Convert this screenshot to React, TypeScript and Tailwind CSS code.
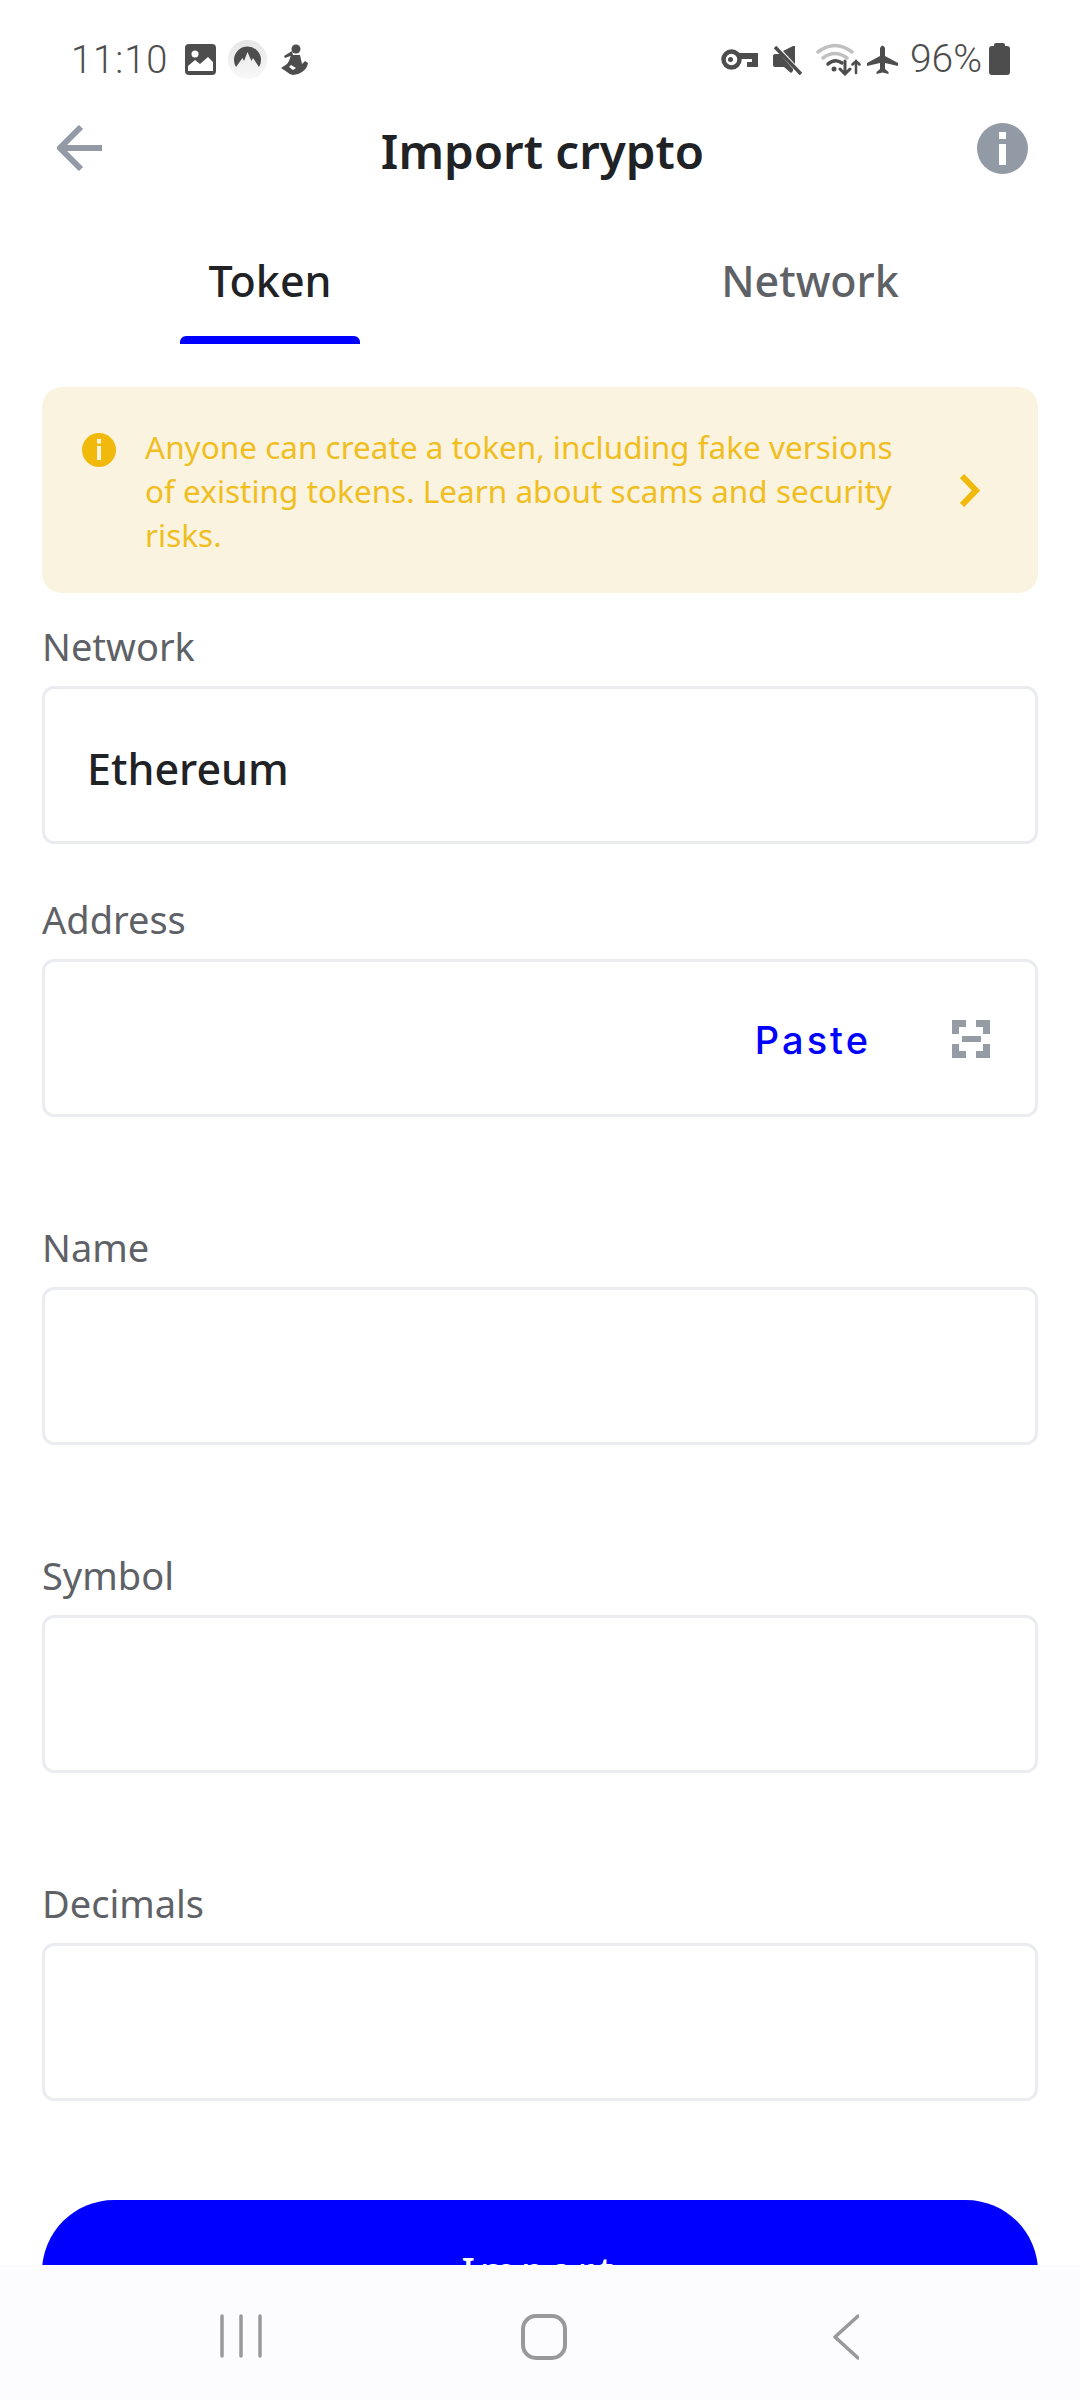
const plex = "font-['Noto_Sans','Liberation_Sans',sans-serif]";

function StatusIcons() {
  return (
    <div className="flex items-center">
      <svg width="37" height="23" viewBox="0 0 37 23" className="mr-[14px]" fill="#4d4d4d">
        <circle cx="10.500" cy="11.500" r="8" fill="none" stroke="#4d4d4d" strokeWidth="4.500" />
        <circle cx="9.500" cy="11.500" r="2.500" />
        <path d="M18 5h19v14H26v-5h5v-3H18z" />
      </svg>
      <svg width="30" height="30" viewBox="0 0 30 30" className="mr-[14px]" fill="#4d4d4d">
        <path d="M1 11q0-2 2-2h5l6 7 7 8v2l-2 2-7-6H3q-2 0-2-2z" />
        <path d="M21 1h2v18L11 6z" />
        <path d="M3 2 29 29" fill="none" stroke="#4d4d4d" strokeWidth="3.500" />
      </svg>
      <svg width="45" height="33" viewBox="0 0 45 33" className="mr-[6px]" fill="none" strokeLinecap="round">
        <path d="M2 9Q19-4 36 9" stroke="#c0c0c0" strokeWidth="3.500" />
        <path d="M7 15Q19 6 31 15" stroke="#c0c0c0" strokeWidth="3.500" />
        <path d="M12 21Q19 15 26 20" stroke="#4d4d4d" strokeWidth="3.500" />
        <circle cx="18" cy="26" r="2.500" fill="#4d4d4d" />
        <path d="M29 18v13m-5-5 5 5 5-5" stroke="#4d4d4d" strokeWidth="3" />
        <path d="M40 30V18m-3.500 3.500L40 18l3.500 3.500" stroke="#4d4d4d" strokeWidth="2.500" />
      </svg>
      <svg width="31" height="29" viewBox="0 0 31 29" className="mr-[12px]" fill="#4d4d4d">
        <path d="M13 3q2.500-5 5 0v8l13 7v3l-13-3v6l3.500 3v2l-6-1.500-6 1.500v-2l3.500-3v-6L0 21v-3l13-7z" />
      </svg>
      <span className="font-['Roboto',sans-serif] text-[39px] leading-none font-light text-[#4d4d4d]">96%</span>
      <div className="relative mt-[2px] ml-[7px] h-[29px] w-[21px] rounded-[3px] bg-[#4d4d4d]">
        <div className="absolute -top-[3px] left-[5px] h-[4px] w-[11px] rounded-t-[2px] bg-[#4d4d4d]" />
      </div>
    </div>
  );
}

function Field({ label, className, children }: { label: string; className: string; children?: React.ReactNode }) {
  return (
    <div className={className}>
      <div className={`${plex} h-[38px] text-[38px] leading-[34px] text-[#5e6166]`}>{label}</div>
      <div className="mt-[19px] flex h-[158px] items-center rounded-[12px] border-[3px] border-[#eaecef] bg-white pl-[42px]">
        {children}
      </div>
    </div>
  );
}

export default function App() {
  return (
    <div className="flex h-[2400px] w-[1080px] flex-col overflow-hidden bg-white">
      <div className="min-h-0 flex-1 overflow-hidden">
        {/* status bar */}
        <div className="flex h-[79px] items-end justify-between pr-[70px] pl-[71px]">
          <div className="flex items-center">
            <span className="font-['Roboto',sans-serif] text-[38px] leading-none font-light tracking-[1px] text-[#4d4d4d]">11:10</span>
            <svg width="31" height="31" viewBox="0 0 31 31" className="ml-[17px]">
              <rect width="31" height="31" rx="4" fill="#4d4d4d" />
              <circle cx="10" cy="10" r="3.500" fill="#fff" />
              <path d="M3 27v-5l7-6 5 4 8-7 5 5v9z" fill="#fff" />
            </svg>
            <svg width="39" height="39" viewBox="0 0 39 39" className="ml-[12px]">
              <defs>
                <linearGradient id="vpn" x1="0" y1="0" x2="0" y2="1">
                  <stop offset="0" stopColor="#e6e6e6" />
                  <stop offset="1" stopColor="#f8f8f8" />
                </linearGradient>
              </defs>
              <circle cx="19.500" cy="19.500" r="19.500" fill="url(#vpn)" />
              <path d="M8 27A13.500 13.500 0 1 1 31 27l-6-9-1.500 3L19.500 12 16 21l-1.500-3z" fill="#4d4d4d" />
            </svg>
            <svg width="27" height="32" viewBox="0 0 27 32" className="ml-[14px]" fill="#4d4d4d">
              <circle cx="15" cy="5" r="4.500" />
              <path d="M11 7 3 12l1 2 8-3z" />
              <path d="M10 11h9l2 9 3-3 3 2q-1 6-6 9-4 3-9 3-3 0-6-3l-6-4 6-4 2-3zM8 23l4 3 3-2-5-3z" fillRule="evenodd" />
            </svg>
          </div>
          <StatusIcons />
        </div>

        {/* header */}
        <div className="mt-[2px] grid h-[140px] grid-cols-[1fr_auto_1fr] items-center pr-[52px] pl-[57px]">
          <svg width="45" height="46" viewBox="0 0 45 46" fill="none" stroke="#929aa5" strokeWidth="6" className="-mt-[6px]">
            <path d="M24 2 3 23l21 21M3 23h42" />
          </svg>
          <h1 className={`${plex} text-[47.500px] leading-none font-semibold text-[#202225]`}>Import crypto</h1>
          <svg width="51" height="51" viewBox="0 0 51 51" className="-mt-[6px] justify-self-end">
            <circle cx="25.500" cy="25.500" r="25.500" fill="#929aa5" />
            <rect x="22" y="9" width="7" height="7" fill="#fff" />
            <rect x="22" y="21" width="7" height="21" fill="#fff" />
          </svg>
        </div>

        {/* tabs */}
        <div className="-mt-[1px] flex h-[124px]">
          <div className="relative flex w-[540px] justify-center pt-[39px]">
            <span className={`${plex} text-[43px] leading-none font-medium text-[#202225]`}>Token</span>
            <div className="absolute bottom-0 left-[180px] h-[8px] w-[180px] rounded-t-[6px] bg-[#0000ff]" />
          </div>
          <div className="flex w-[540px] justify-center pt-[39px]">
            <span className={`${plex} text-[43px] leading-none font-medium text-[#5e6166]`}>Network</span>
          </div>
        </div>

        <div className="px-[42px]">
          {/* warning */}
          <div className="mt-[43px] flex h-[206px] items-center rounded-[20px] bg-[#faf3e0] pr-[57px] pl-[40px]">
            <svg width="34" height="34" viewBox="0 0 34 34" className="-mt-[80px] shrink-0">
              <circle cx="17" cy="17" r="17" fill="#f0b90b" />
              <rect x="15" y="6" width="4" height="4.500" fill="#faf3e0" />
              <rect x="15" y="13" width="4" height="14" fill="#faf3e0" />
            </svg>
            <p className={`${plex} ml-[29px] w-[770px] pt-[2px] text-[31.500px] leading-[44px] text-[#f0b90b] opacity-90`}>
              Anyone can create a token, including fake versions of existing tokens. Learn about scams and security risks.
            </p>
            <svg width="21" height="33" viewBox="0 0 21 33" fill="none" stroke="#f0b90b" strokeWidth="6" className="ml-auto">
              <path d="M2 2l14 14.500L2 31" />
            </svg>
          </div>

          <Field label="Network" className="mt-[36px]">
            <span className={`${plex} pt-[6px] text-[43px] leading-none font-medium text-[#202225]`}>Ethereum</span>
          </Field>

          <Field label="Address" className="mt-[58px]">
            <span className="ml-auto pt-[4px] font-['Inter',sans-serif] text-[38px] leading-none font-medium tracking-[3px] text-[#0000ff]">Paste</span>
            <svg width="38" height="38" viewBox="0 0 38 38" fill="#969ca6" className="mt-[2px] mr-[45px] ml-[81px]">
              <path d="M0 0h14v7H7v7H0zM24 0h14v14h-7V7h-7zM10 16h19v6H10zM0 24h7v7h7v7H0zM31 24h7v14H24v-7h7z" />
            </svg>
          </Field>

          <Field label="Name" className="mt-[113px]" />
          <Field label="Symbol" className="mt-[113px]" />
          <Field label="Decimals" className="mt-[113px]" />

          <button className={`${plex} mt-[99px] flex h-[144px] w-full items-center justify-center rounded-full bg-[#0000ff] pb-[4px] text-[38px] font-medium tracking-[5px] text-white`}>
            Import
          </button>
        </div>
      </div>

      {/* nav bar */}
      <div className="flex h-[135px] shrink-0 items-start bg-[#fcfcfe] pt-[49px]">
        <svg width="44" height="44" viewBox="0 0 44 44" fill="none" stroke="#999" strokeWidth="3.500" strokeLinecap="round" className="ml-[219px]">
          <path d="M3 2v40M22 2v40M41 2v40" />
        </svg>
        <svg width="46" height="46" viewBox="0 0 46 46" fill="none" stroke="#999" strokeWidth="4" className="ml-[258px]">
          <rect x="2" y="2" width="42" height="42" rx="13" />
        </svg>
        <svg width="26" height="46" viewBox="0 0 26 46" fill="none" stroke="#999" strokeWidth="3.500" strokeLinecap="round" strokeLinejoin="round" className="ml-[266px]">
          <path d="M25 2 2 23l23 21" />
        </svg>
      </div>
    </div>
  );
}
